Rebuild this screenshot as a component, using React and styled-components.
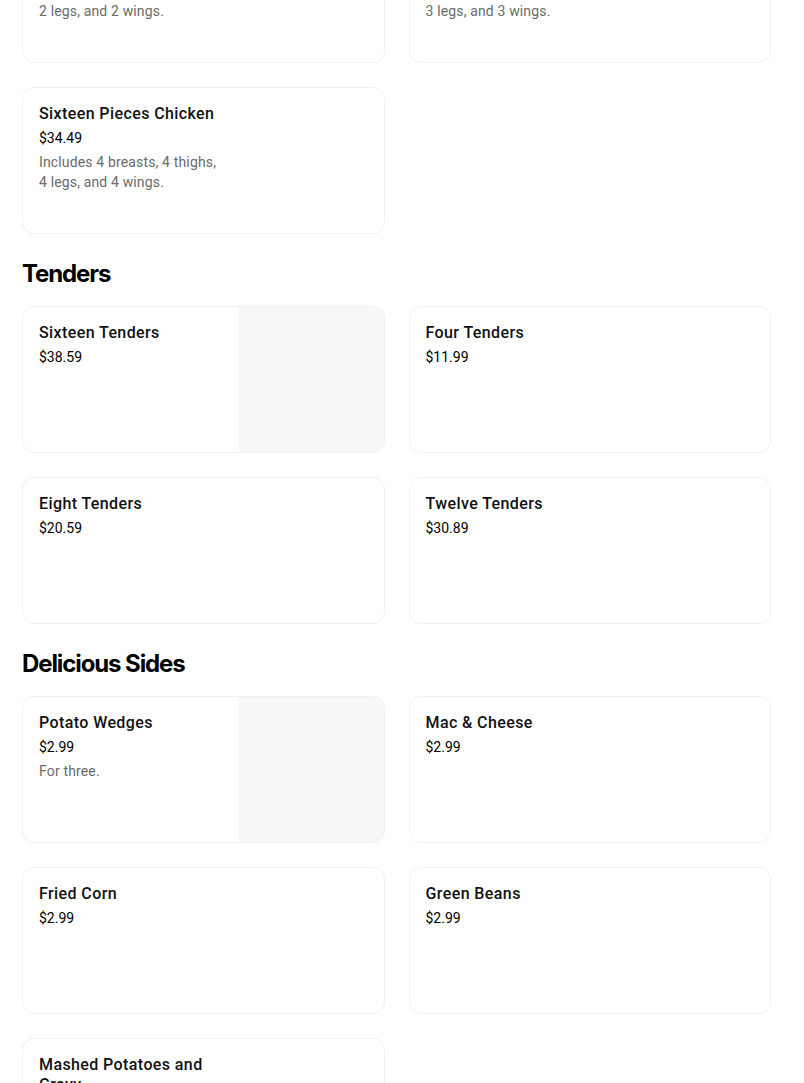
import React from "react";
import styled, { createGlobalStyle } from "styled-components";

const Global = createGlobalStyle`
  html, body { margin: 0; padding: 0; background: #ffffff; }
  body { font-family: Roboto, "Liberation Sans", sans-serif; color: #000; overflow: hidden; }
`;

const Page = styled.main`
  width: 749px;
  padding: 0 0 0 22px;
  margin-top: -84px;
  display: flex;
  flex-direction: column;
`;

const Section = styled.section`
  display: flex;
  flex-direction: column;
`;

const Heading = styled.h2`
  margin: 24px 0 16px;
  font-family: Inter, "Noto Sans", sans-serif;
  font-size: 24px;
  line-height: 32px;
  font-weight: 700;
  letter-spacing: -1.1px;
  color: #000;
`;

const Grid = styled.div`
  display: grid;
  grid-template-columns: 1fr 1fr;
  gap: 24px;
`;

const Card = styled.div`
  display: flex;
  height: 147px;
  box-sizing: border-box;
  border: 1px solid #f1f1f1;
  border-radius: 12px;
  overflow: hidden;
  background: #fff;
`;

const Info = styled.div`
  flex: 1;
  padding: 16px;
  min-width: 0;
`;

const Title = styled.div`
  font-size: 16px;
  line-height: 20px;
  font-weight: 500;
  letter-spacing: 0.4px;
  color: #111;
`;

const Price = styled.div`
  margin-top: 4px;
  font-size: 14px;
  line-height: 20px;
  color: #000;
`;

const Desc = styled.div`
  margin-top: 4px;
  font-size: 14px;
  line-height: 20px;
  letter-spacing: 0.15px;
  color: #6b6b6b;
`;

const Photo = styled.div`
  width: 145px;
  flex: 0 0 145px;
  background: ${(p) => (p.$filled ? "#f7f7f7" : "transparent")};
`;

const sections = [
  {
    title: null,
    items: [
      { name: "Eight Pieces Chicken", price: "$18.99", desc: "Includes 2 breasts, 2 thighs, 2 legs, and 2 wings." },
      { name: "Twelve Pieces Chicken", price: "$26.99", desc: "Includes 3 breasts, 3 thighs, 3 legs, and 3 wings." },
      { name: "Sixteen Pieces Chicken", price: "$34.49", desc: "Includes 4 breasts, 4 thighs, 4 legs, and 4 wings." },
    ],
  },
  {
    title: "Tenders",
    items: [
      { name: "Sixteen Tenders", price: "$38.59", img: true },
      { name: "Four Tenders", price: "$11.99" },
      { name: "Eight Tenders", price: "$20.59" },
      { name: "Twelve Tenders", price: "$30.89" },
    ],
  },
  {
    title: "Delicious Sides",
    items: [
      { name: "Potato Wedges", price: "$2.99", desc: "For three.", img: true },
      { name: "Mac & Cheese", price: "$2.99" },
      { name: "Fried Corn", price: "$2.99" },
      { name: "Green Beans", price: "$2.99" },
      { name: "Mashed Potatoes and Gravy", price: "$2.99" },
    ],
  },
];

export default function App() {
  return (
    <>
      <Global />
      <Page>
        {sections.map((s, i) => (
          <Section key={i}>
            {s.title && <Heading>{s.title}</Heading>}
            <Grid>
              {s.items.map((it) => (
                <Card key={it.name}>
                  <Info>
                    <Title>{it.name}</Title>
                    <Price>{it.price}</Price>
                    {it.desc && <Desc>{it.desc}</Desc>}
                  </Info>
                  <Photo $filled={it.img} />
                </Card>
              ))}
            </Grid>
          </Section>
        ))}
      </Page>
    </>
  );
}
